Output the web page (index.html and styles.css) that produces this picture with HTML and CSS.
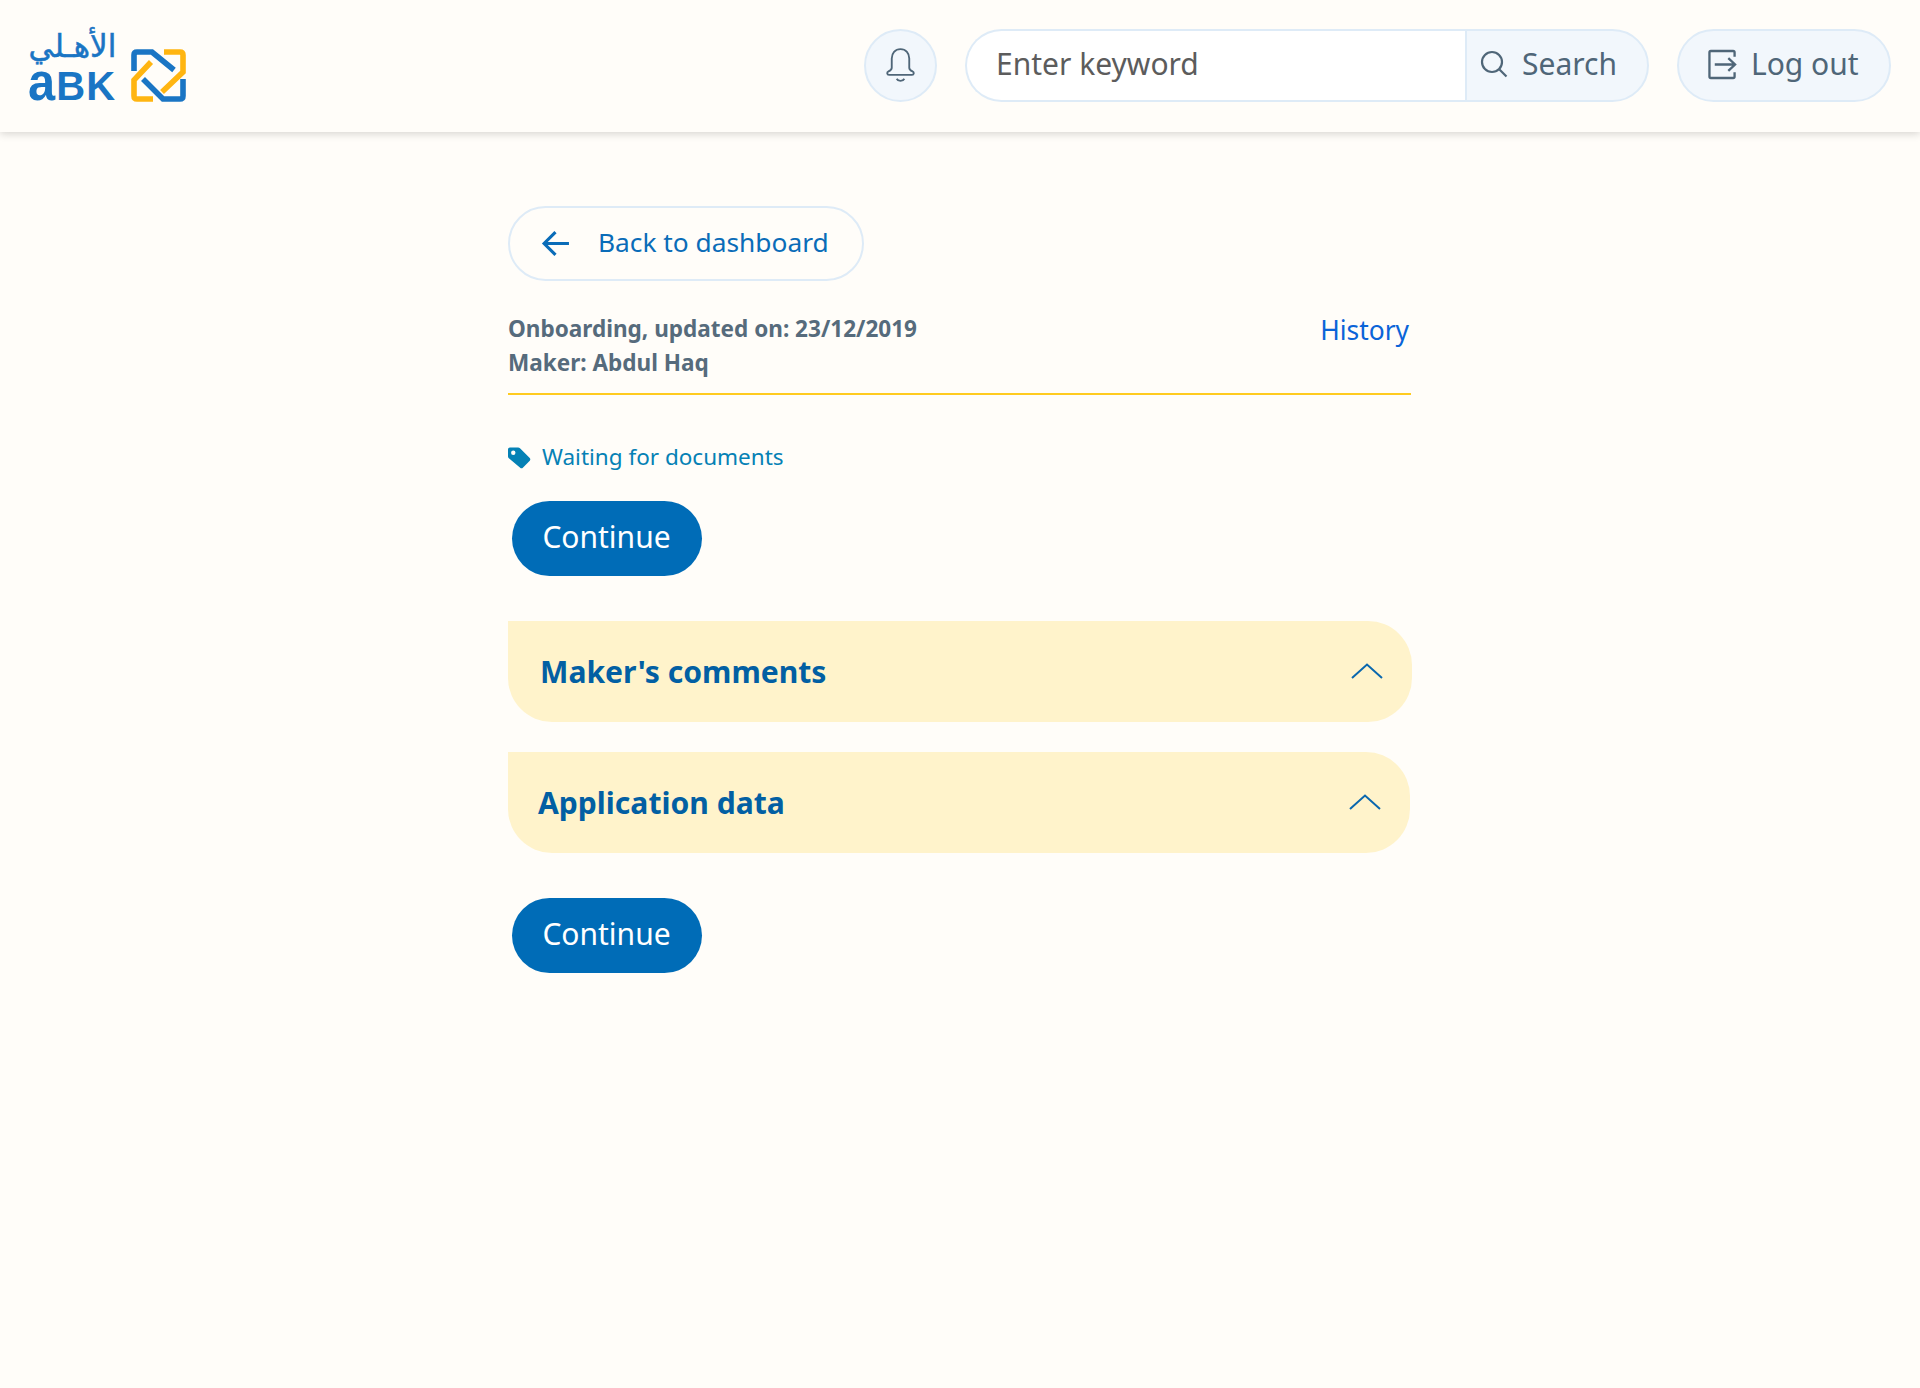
FILE: index.html
```html
<!DOCTYPE html>
<html lang="en">
<head>
<meta charset="utf-8">
<title>Onboarding</title>
<link rel="stylesheet" href="styles.css">
</head>
<body>
<header class="topbar">
  <a class="logo" href="#">
    <span class="logo-words">
      <span class="logo-ar" lang="ar" dir="rtl">الأهـلي</span>
      <span class="logo-en"><span class="logo-a">a</span>BK</span>
    </span>
    <svg class="logo-mark" viewBox="0 0 55 53" fill="none" stroke-width="5.6">
      <path stroke="#ffb511" d="M20 13 L3 31 V47 Q3 50 6 50 H22"/>
      <path stroke="#ffb511" d="M33 3 H49 Q52 3 52 6 V23 L31 43"/>
      <path stroke="#1a75c4" d="M3 22 V6 Q3 3 6 3 H21 L43 21"/>
      <path stroke="#1a75c4" d="M12 30 L32 50 H49 Q52 50 52 47 V30"/>
    </svg>
  </a>
  <div class="tools">
    <button class="bell" aria-label="Notifications">
      <svg class="icon-bell" viewBox="0 0 30 32" fill="none" stroke="#4f6678" stroke-width="1.700">
        <path d="M15 2c-5 0-8 3.600-8 8.500v8.500c0 1.700-1.200 2.600-3 3.300-1.700.7-1.500 3.200.5 3.200h21c2 0 2.200-2.500.5-3.200-1.800-.7-3-1.600-3-3.300v-8.500C23 5.600 20 2 15 2z"/>
        <path d="M11.500 29c.8 1.500 2 2 3.500 2s2.700-.5 3.500-2"/>
      </svg>
    </button>
    <form class="search">
      <input class="search-input" type="text" placeholder="Enter keyword">
      <button class="search-btn" type="button">
        <svg class="icon-search" viewBox="0 0 28 28" fill="none" stroke="#4f6678" stroke-width="2.200">
          <circle cx="12" cy="12" r="10"/>
          <path d="M19.500 19.500L26.500 26.500"/>
        </svg>
        <span class="btn-label">Search</span>
      </button>
    </form>
    <button class="logout">
      <svg class="icon-logout" viewBox="0 0 30 32" fill="none" stroke="#4f6678" stroke-width="2.400">
        <path d="M27.500 8V3.500a1.500 1.500 0 0 0-1.500-1.500H3a1.500 1.500 0 0 0-1.500 1.500v25A1.500 1.500 0 0 0 3 30h23a1.500 1.500 0 0 0 1.500-1.500V24"/>
        <path d="M7 16h21M21 9.500l7 6.500-7 6.500"/>
      </svg>
      <span class="btn-label">Log out</span>
    </button>
  </div>
</header>

<main class="page">
  <a class="back" href="#">
    <svg class="icon-back" viewBox="0 0 28 26" fill="none" stroke="#0a6cb8" stroke-width="3">
      <path d="M27 13H3M14 2L3 13l11 11"/>
    </svg>
    <span class="btn-label">Back to dashboard</span>
  </a>

  <div class="meta">
    <div class="meta-text">
      <div>Onboarding, updated on: 23/12/2019</div>
      <div>Maker: Abdul Haq</div>
    </div>
    <a class="history" href="#">History</a>
  </div>

  <div class="status">
    <svg class="icon-tag" viewBox="0 0 24 22">
      <path fill="#0581b5" d="M2 0h8.500c.8 0 1.500.3 2 .8l10.200 10.200c.8.800.8 2 0 2.800l-7.200 7.400c-.8.800-2 .8-2.800 0L.6 11C.2 10.500 0 10 0 9.300V2C0 .9.900 0 2 0zm3.500 3.300a2.300 2.300 0 1 0 0 4.600 2.300 2.300 0 0 0 0-4.600z"/>
    </svg>
    <span>Waiting for documents</span>
  </div>

  <button class="continue" type="button">Continue</button>

  <section class="panel panel-first">
    <h2>Maker's comments</h2>
    <svg class="chevron" viewBox="0 0 32 16" fill="none" stroke="#0a67ae" stroke-width="2"><path d="M1 15L16 1.500 31 15"/></svg>
  </section>

  <section class="panel panel-second">
    <h2>Application data</h2>
    <svg class="chevron" viewBox="0 0 32 16" fill="none" stroke="#0a67ae" stroke-width="2"><path d="M1 15L16 1.500 31 15"/></svg>
  </section>

  <button class="continue continue-last" type="button">Continue</button>
</main>
</body>
</html>
```
FILE: styles.css
```css
* { box-sizing: border-box; }
html, body { margin: 0; }
body {
  min-height: 1388px;
  background: #fffdf9;
  font-family: "Noto Sans", sans-serif;
  color: #4f6678;
}
a { text-decoration: none; }
button { font-family: inherit; cursor: pointer; }

.topbar {
  height: 132px;
  display: flex;
  align-items: center;
  justify-content: space-between;
  padding: 0 29px 2px 28px;
  background: #fffdf9;
  box-shadow: 0 2px 8px rgba(0, 0, 0, .16);
}
.logo { display: flex; align-items: flex-end; gap: 14px; margin-top: 2px; }
.logo-words { display: flex; flex-direction: column; width: 89px; }
.logo-ar {
  font: 400 31px/40px "DejaVu Sans", sans-serif;
  color: #1a75c4;
  text-align: center;
  white-space: nowrap;
  -webkit-text-stroke: .5px #1a75c4;
}
.logo-en {
  font: 700 40px/30px "Liberation Sans", sans-serif;
  color: #1a75c4;
  letter-spacing: 1px;
  white-space: nowrap;
}
.logo-a {
  display: inline-block;
  line-height: 1;
  margin-right: 5px;
  transform: scale(1.22, 1.32);
  transform-origin: 0 85%;
}
.logo-mark { width: 55px; height: 53px; display: block; margin-bottom: 4px; }

.tools { display: flex; align-items: center; gap: 28px; }
.btn-label { padding-bottom: 3px; }
.bell {
  width: 73px;
  height: 73px;
  padding: 0;
  display: flex;
  align-items: center;
  justify-content: center;
  border: 2px solid #deebf7;
  border-radius: 50%;
  background: #f2f7fc;
}
.icon-bell { width: 33px; height: 35px; margin-bottom: 1px; }

.search { display: flex; height: 73px; }
.search-input {
  width: 500px;
  height: 73px;
  padding: 0 29px 3px;
  border: 2px solid #deebf7;
  border-right: 0;
  border-radius: 37px 0 0 37px;
  background: #fff;
  font: 30px "Noto Sans", sans-serif;
  color: #5c5c5c;
  outline: 0;
}
.search-input::placeholder { color: #5c5c5c; opacity: 1; }
.search-btn {
  width: 184px;
  height: 73px;
  display: flex;
  align-items: center;
  gap: 14px;
  padding: 0 0 0 13px;
  border: 2px solid #deebf7;
  border-radius: 0 37px 37px 0;
  background: #f2f7fc;
  font-size: 30px;
  color: #4f6678;
}
.icon-search { width: 28px; height: 28px; flex: none; margin-bottom: 2px; }
.logout {
  width: 214px;
  height: 73px;
  display: flex;
  align-items: center;
  gap: 14px;
  padding: 0 0 0 29px;
  border: 2px solid #deebf7;
  border-radius: 37px;
  background: #f2f7fc;
  font-size: 30px;
  color: #4f6678;
}
.icon-logout { width: 29px; height: 31px; flex: none; margin-bottom: 2px; }

.page {
  width: 905px;
  margin-left: 508px;
  padding-top: 74px;
  display: flex;
  flex-direction: column;
  align-items: flex-start;
}
.back {
  width: 356px;
  height: 75px;
  display: flex;
  align-items: center;
  gap: 28px;
  padding-left: 31px;
  border: 2px solid #deebf7;
  border-radius: 38px;
  font-size: 26.3px;
  color: #0a6cb8;
}
.icon-back { width: 29px; height: 27px; flex: none; }

.meta {
  width: 903px;
  margin-top: 31px;
  padding-bottom: 14px;
  display: flex;
  justify-content: space-between;
  border-bottom: 2px solid #ffcb1f;
}
.meta-text { font-size: 22.55px; font-weight: 700; line-height: 33.5px; color: #566b7c; }
.history { font-size: 26.4px; line-height: 36px; color: #0a64d8; padding-right: 2px; }

.status {
  margin-top: 45px;
  display: flex;
  align-items: center;
  gap: 11px;
  font-size: 22.5px;
  line-height: 33px;
  color: #0581b5;
}
.icon-tag { width: 23px; height: 22px; flex: none; margin-top: 3px; }

.continue {
  width: 190px;
  height: 75px;
  margin: 28px 0 0 4px;
  padding: 0 1px 5px 0;
  border: 0;
  border-radius: 38px;
  background: #006cb7;
  color: #fff;
  font-size: 30px;
}
.continue-last { margin-top: 45px; }

.panel {
  height: 101px;
  display: flex;
  align-items: center;
  justify-content: space-between;
  border-radius: 0 44px 44px 44px;
  background: #fff3cb;
}
.panel h2 { margin: 0; padding-bottom: 1px; font-size: 30.1px; font-weight: 700; color: #025fa3; }
.chevron { width: 32px; height: 16px; margin-bottom: 2px; }
.panel-first { width: 904px; margin-top: 45px; padding: 0 29px 0 32px; }
.panel-second { width: 902px; margin-top: 30px; padding: 0 29px 0 30px; }
```
